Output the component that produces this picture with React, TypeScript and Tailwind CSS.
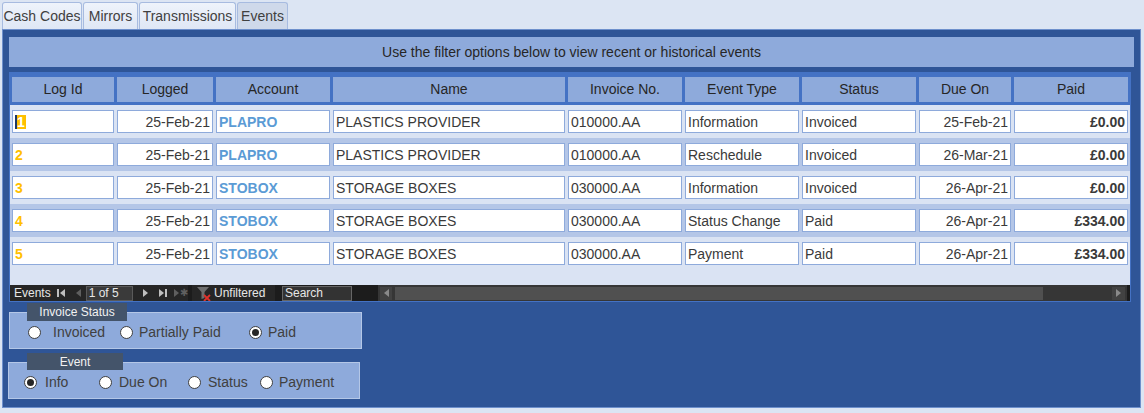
import React from 'react';

type Row = {
  id: string;
  logged: string;
  account: string;
  name: string;
  invoice: string;
  type: string;
  status: string;
  due: string;
  paid: string;
};

const rows: Row[] = [
  { id: '1', logged: '25-Feb-21', account: 'PLAPRO', name: 'PLASTICS PROVIDER', invoice: '010000.AA', type: 'Information', status: 'Invoiced', due: '25-Feb-21', paid: '£0.00' },
  { id: '2', logged: '25-Feb-21', account: 'PLAPRO', name: 'PLASTICS PROVIDER', invoice: '010000.AA', type: 'Reschedule', status: 'Invoiced', due: '26-Mar-21', paid: '£0.00' },
  { id: '3', logged: '25-Feb-21', account: 'STOBOX', name: 'STORAGE BOXES', invoice: '030000.AA', type: 'Information', status: 'Invoiced', due: '26-Apr-21', paid: '£0.00' },
  { id: '4', logged: '25-Feb-21', account: 'STOBOX', name: 'STORAGE BOXES', invoice: '030000.AA', type: 'Status Change', status: 'Paid', due: '26-Apr-21', paid: '£334.00' },
  { id: '5', logged: '25-Feb-21', account: 'STOBOX', name: 'STORAGE BOXES', invoice: '030000.AA', type: 'Payment', status: 'Paid', due: '26-Apr-21', paid: '£334.00' },
];

const headers = ['Log Id', 'Logged', 'Account', 'Name', 'Invoice No.', 'Event Type', 'Status', 'Due On', 'Paid'];

const gridCols = 'grid grid-cols-[102px_96px_114px_232px_114px_114px_114px_92px_114px] gap-x-[3px]';

const Cell: React.FC<{ children?: React.ReactNode; className?: string }> = ({ children, className = '' }) => (
  <div className={`h-[23px] bg-white border border-[#8eaadb] flex items-center px-[2px] text-[14px] text-[#3a3a3a] leading-none whitespace-nowrap overflow-hidden ${className}`}>
    {children}
  </div>
);

const Radio: React.FC<{ checked?: boolean }> = ({ checked }) => (
  <span className="w-[13px] h-[13px] rounded-full bg-white border border-[#3f3f3f] flex items-center justify-center shrink-0">
    {checked && <span className="w-[7px] h-[7px] rounded-full bg-[#262626]" />}
  </span>
);

const Option: React.FC<{ label: string; checked?: boolean; w?: string; gap?: string }> = ({ label, checked, w = '', gap = 'ml-[6px]' }) => (
  <div className={`flex items-center ${w}`}>
    <Radio checked={checked} />
    <span className={`${gap} text-[14px] text-[#404040]`}>{label}</span>
  </div>
);

const Tri: React.FC<{ dir: 'l' | 'r'; color: string }> = ({ dir, color }) => (
  <svg width="5" height="8" viewBox="0 0 5 8">
    {dir === 'l' ? <path d="M5 0 L0 4 L5 8 Z" fill={color} /> : <path d="M0 0 L5 4 L0 8 Z" fill={color} />}
  </svg>
);

export default function App() {
  return (
    <div className="w-[1144px] h-[413px] bg-[#dce5f3] font-['Liberation_Sans',Arial,sans-serif] overflow-hidden">
      {/* tabs */}
      <div className="flex items-end gap-px pl-[2px] pt-[2px] h-[29px]">
        {[
          { t: 'Cash Codes', w: 'w-[80px]' },
          { t: 'Mirrors', w: 'w-[55px]' },
          { t: 'Transmissions', w: 'w-[97px]' },
          { t: 'Events', w: 'w-[51px]', active: true },
        ].map((tab) => (
          <div
            key={tab.t}
            className={`${tab.w} h-[27px] flex items-center justify-center rounded-t-[3px] border border-b-0 border-[#a7bbe0] text-[14px] text-[#404040] ${tab.active ? 'bg-[#cfd9ea]' : 'bg-gradient-to-b from-[#eef3fb] to-[#dfe7f5]'}`}
          >
            {tab.t}
          </div>
        ))}
      </div>

      {/* main panel */}
      <div className="mx-[2px] w-[1139px] h-[379px] bg-[#2f5597] border border-[#6e90cc] pl-[6px] pt-[7px]">
        <div className="w-[1125px] h-[30px] bg-[#8eaadb] flex items-center justify-center text-[14px] text-[#262626]">
          Use the filter options below to view recent or historical events
        </div>

        {/* datasheet */}
        <div className="mt-[5px] w-[1122px] bg-[#4472c4] p-px">
          <div className={`${gridCols} px-[2px] pt-[4px] pb-[3px]`}>
            {headers.map((h) => (
              <div key={h} className="h-[25px] bg-[#8eaadb] flex items-center justify-center text-[14px] text-[#262626]">
                {h}
              </div>
            ))}
          </div>
          <div className="bg-[#dae3f3] h-[180px]">
            {rows.map((r, i) => (
              <div key={r.id} className={`h-[33px] pt-[5px] px-[2px] ${i % 2 === 1 ? 'bg-[#b4c6e7]' : 'bg-[#dae3f3]'}`}>
                <div className={gridCols}>
                  <Cell className="font-bold text-[#ffc000]">
                    {i === 0 ? (
                      <span className="bg-[#ffc000] text-white border-l-2 border-[#1f3864] pr-px">1</span>
                    ) : (
                      <span className="text-[#ffc000]">{r.id}</span>
                    )}
                  </Cell>
                  <Cell className="justify-end">{r.logged}</Cell>
                  <Cell className="font-bold text-[#5b9bd5]">
                    <span className="text-[#5b9bd5]">{r.account}</span>
                  </Cell>
                  <Cell>{r.name}</Cell>
                  <Cell>{r.invoice}</Cell>
                  <Cell>{r.type}</Cell>
                  <Cell>{r.status}</Cell>
                  <Cell className="justify-end">{r.due}</Cell>
                  <Cell className="justify-end font-bold">{r.paid}</Cell>
                </div>
              </div>
            ))}
          </div>

          {/* navigation bar */}
          <div className="h-[16px] bg-[#1c1c1c] flex items-center text-[12px] text-[#e6e6e6] leading-none">
            <div className="h-full bg-[#262626] flex items-center pl-[4px] w-[178px]">
              <span>Events</span>
              <span className="ml-[6px] flex items-center gap-px">
                <span className="w-[2px] h-[8px] bg-[#bfbfbf]" />
                <Tri dir="l" color="#bfbfbf" />
              </span>
              <span className="ml-[11px]">
                <Tri dir="l" color="#5f5f5f" />
              </span>
              <span className="ml-[5px] w-[50px] h-[15px] bg-[#3a3a3a] border border-[#5a5a5a] flex items-center pl-[2px]">1 of 5</span>
              <span className="ml-[10px]">
                <Tri dir="r" color="#bfbfbf" />
              </span>
              <span className="ml-[11px] flex items-center gap-px">
                <Tri dir="r" color="#bfbfbf" />
                <span className="w-[2px] h-[8px] bg-[#bfbfbf]" />
              </span>
              <span className="ml-[7px] flex items-center text-[#5f5f5f]">
                <Tri dir="r" color="#5f5f5f" />
                <span className="text-[10px] ml-px">✱</span>
              </span>
            </div>
            <div className="h-full w-[4px]" />
            <div className="h-full bg-[#262626] flex items-center w-[83px] pl-[4px]">
              <svg width="16" height="15" viewBox="0 0 16 15">
                <path d="M1 1 H13 L8.5 6 V12 L5.5 13 V6 Z" fill="#6e6e6e" />
                <path d="M8 9 L14 15 M14 9 L8 15" stroke="#e0312b" strokeWidth="1.8" />
              </svg>
              <span className="ml-[2px]">Unfiltered</span>
            </div>
            <div className="h-full w-[7px]" />
            <div className="h-[15px] w-[70px] bg-[#333333] border border-[#666] flex items-center pl-[2px]">Search</div>
            <div className="h-full w-[26px]" />
            <div className="h-full flex-1 bg-[#363636] flex items-center px-[2px] gap-[3px] mr-[3px]">
              <div className="w-[12px] h-[13px] bg-[#424242] flex items-center justify-center">
                <Tri dir="l" color="#8a8a8a" />
              </div>
              <div className="w-[648px] h-[13px] bg-[#505050]" />
              <div className="flex-1" />
              <div className="w-[13px] h-[13px] bg-[#424242] flex items-center justify-center">
                <Tri dir="r" color="#8a8a8a" />
              </div>
            </div>
          </div>
        </div>

        {/* invoice status */}
        <div className="mt-[1px]">
          <div className="relative z-10 ml-[18px] w-[100px] h-[18px] bg-[#44546a] text-[#f2f2f2] text-[12px] flex items-center justify-center">
            Invoice Status
          </div>
          <div className="-mt-[9px] w-[353px] h-[37px] bg-[#8eaadb] border border-[#b4c7e7] flex items-center pl-[18px] pt-[4px]">
            <Option label="Invoiced" w="w-[92px]" gap="ml-[12px]" />
            <Option label="Partially Paid" w="w-[129px]" />
            <Option label="Paid" checked />
          </div>
        </div>

        {/* event */}
        <div className="mt-[4px] -ml-px">
          <div className="relative z-10 ml-[19px] w-[96px] h-[17px] bg-[#44546a] text-[#f2f2f2] text-[12px] flex items-center justify-center">
            Event
          </div>
          <div className="-mt-[8px] w-[352px] h-[37px] bg-[#8eaadb] border border-[#b4c7e7] flex items-center pl-[15px] pt-[4px]">
            <Option label="Info" checked w="w-[75px]" gap="ml-[8px]" />
            <Option label="Due On" w="w-[89px]" gap="ml-[7px]" />
            <Option label="Status" w="w-[72px]" gap="ml-[7px]" />
            <Option label="Payment" gap="ml-[6px]" />
          </div>
        </div>
      </div>
    </div>
  );
}
